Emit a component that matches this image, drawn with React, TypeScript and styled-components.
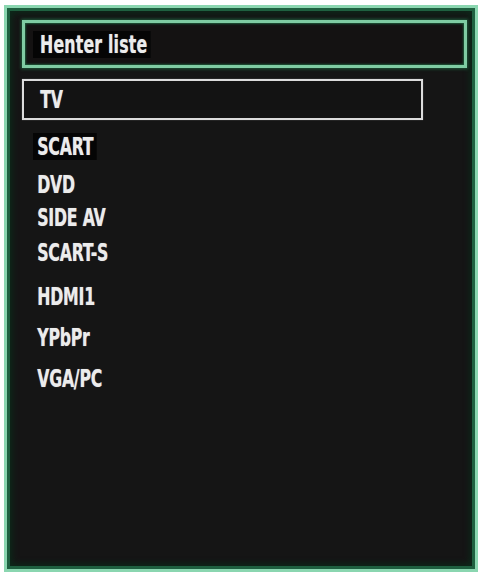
import React from 'react';
import styled, { createGlobalStyle } from 'styled-components';

const GlobalStyle = createGlobalStyle`
  html, body {
    margin: 0;
    padding: 0;
    background: #ffffff;
  }
`;

const sources = [
  { label: 'SCART', top: 11, marked: true },
  { label: 'DVD', top: 8 },
  { label: 'SIDE AV', top: 3 },
  { label: 'SCART-S', top: 5 },
  { label: 'HDMI1', top: 14 },
  { label: 'YPbPr', top: 11 },
  { label: 'VGA/PC', top: 11 },
];

const App: React.FC = () => {
  return (
    <>
      <GlobalStyle />
      <Frame>
        <Header>
          <Label $marked $padLeft={10} $spacing={0.3}>Henter liste</Label>
        </Header>
        <Selected>
          <Label>TV</Label>
        </Selected>
        <List>
          {sources.map((s) => (
            <Item key={s.label} $top={s.top}>
              <Label $marked={s.marked}>{s.label}</Label>
            </Item>
          ))}
        </List>
      </Frame>
    </>
  );
};

// 样式组件
const Frame = styled.div`
  box-sizing: border-box;
  width: 474px;
  height: 567px;
  margin: 5px 0 0 4px;
  padding: 12px 0 0 15px;
  background-color: #151515;
  border: 3px solid #8ad6b0;
  box-shadow: inset 0 0 0 3px #1f6040, inset 0 0 6px 5px #0c2a1a;
  font-family: 'DejaVu Sans Condensed', 'DejaVu Sans', sans-serif;
`;

const Header = styled.div`
  box-sizing: border-box;
  width: 445px;
  height: 48px;
  display: flex;
  align-items: center;
  padding-left: 8px;
  background-color: #141212;
  border: 3px solid #7fcca3;
  box-shadow: 0 0 3px 1px #1d5a3a, inset 0 0 2px 1px #1d5a3a;
`;

const Selected = styled.div`
  box-sizing: border-box;
  width: 401px;
  height: 41px;
  margin-top: 11px;
  display: flex;
  align-items: center;
  padding-left: 12px;
  background-color: #131313;
  border: 2px solid #dcdcdc;
  box-shadow: 0 0 1px 0 rgba(255, 255, 255, 0.4);
`;

const List = styled.div`
  display: flex;
  flex-direction: column;
  padding-left: 11px;
`;

const Item = styled.div<{ $top: number }>`
  height: 30px;
  display: flex;
  align-items: center;
  margin-top: ${(p) => p.$top}px;
`;

const Label = styled.span<{ $marked?: boolean; $padLeft?: number; $spacing?: number }>`
  display: inline-block;
  padding: 2px 5px 2px ${(p) => p.$padLeft ?? 6}px;
  background-color: ${(p) => (p.$marked ? '#050505' : 'transparent')};
  color: #ececec;
  font-size: 25px;
  font-weight: 700;
  line-height: 23px;
  letter-spacing: ${(p) => p.$spacing ?? -0.3}px;
  transform: scaleX(0.7);
  transform-origin: left center;
  text-shadow: 0 0 1px rgba(255, 255, 255, 0.55);
  white-space: nowrap;
`;

export default App;
